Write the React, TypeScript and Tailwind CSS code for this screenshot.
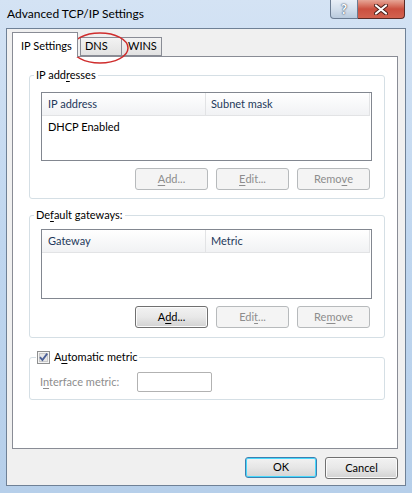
import React from 'react';

function Acc({ text, k }: { text: string; k: number }) {
    if (k < 0) return <>{text}</>;
    return (
        <>
            {text.slice(0, k)}
            <span className="underline underline-offset-[2px]">{text[k]}</span>
            {text.slice(k + 1)}
        </>
    );
}

function Btn({ text, k, disabled, primary, w }: { text: string; k: number; disabled?: boolean; primary?: boolean; w: string }) {
    const base = 'flex items-center justify-center rounded-[3px] border text-[11px]';
    if (disabled) {
        return (
            <div className={`${base} ${w} h-[22px] border-[#b7babc] bg-[#f4f4f4] text-[#8d8d8d]`}>
                <Acc text={text} k={k} />
            </div>
        );
    }
    if (primary) {
        return (
            <div className={`${base} ${w} h-[21px] border-[#3c7fb1] bg-gradient-to-b from-[#f2f2f2] via-[#e6e6e6] to-[#d4d4d4] text-black shadow-[inset_0_0_0_1px_#48d8fb]`}>
                <Acc text={text} k={k} />
            </div>
        );
    }
    return (
        <div className={`${base} ${w} h-[22px] border-[#707070] bg-gradient-to-b from-[#f2f2f2] via-[#e8e8e8] to-[#d2d2d2] text-black shadow-[inset_0_0_0_1px_#fbfbfb]`}>
            <Acc text={text} k={k} />
        </div>
    );
}

function ListBox({ h, cols, rows }: { h: string; cols: string[]; rows: string[] }) {
    return (
        <div className={`${h} border border-[#828790] bg-white`}>
            <div className="flex h-[23px]">
                {cols.map((c, i) => (
                    <div
                        key={c}
                        className={`flex h-full w-[164px] items-center border-b border-r border-[#e2e3e5] bg-gradient-to-b from-white to-[#f1f2f4] text-[#1e395b] ${i === 0 ? 'pl-[6px]' : 'pl-[5px]'}`}
                    >
                        {c}
                    </div>
                ))}
            </div>
            {rows.map((r) => (
                <div key={r} className="pl-[6px] pt-[2px] leading-[18px]">
                    {r}
                </div>
            ))}
        </div>
    );
}

export default function App() {
    return (
        <div className="relative h-[493px] w-[412px] overflow-hidden bg-gradient-to-b from-[#d4e3f4] via-[#bfd6ef] to-[#b6cfea] font-['Lato','Liberation_Sans',sans-serif] text-[11px] text-black">
            {/* Title bar */}
            <div className="flex h-[28px] items-start justify-between pl-[7px] pr-[7px]">
                <div className="pt-[6px] text-[12px] leading-[16px] text-black">Advanced TCP/IP Settings</div>
                <div className="flex">
                    <div className="flex h-[19px] w-[28px] items-center justify-center rounded-bl-[4px] border border-t-0 border-[#6b7c92] bg-gradient-to-b from-[#e9eff7] via-[#d3dfec] to-[#b9cadd]">
                        <span className="text-[13px] font-bold leading-none text-white [text-shadow:0_0_2px_#3a4a60,0_0_1px_#3a4a60]">?</span>
                    </div>
                    <div className="flex h-[19px] w-[47px] items-center justify-center rounded-br-[4px] border border-l-0 border-t-0 border-[#5a2a25] bg-gradient-to-b from-[#e6a596] via-[#cb4f3f] to-[#d2624f]">
                        <svg width="14" height="11" viewBox="0 0 14 11">
                            <path d="M2 1.5 L12 9.5 M12 1.5 L2 9.5" stroke="#4a1e18" strokeWidth="4" strokeLinecap="round" />
                            <path d="M2 1.5 L12 9.5 M12 1.5 L2 9.5" stroke="#ffffff" strokeWidth="2.2" strokeLinecap="round" />
                        </svg>
                    </div>
                </div>
            </div>

            {/* Client area */}
            <div className="mx-[6px] h-[458px] border border-[#6f8196] bg-[#f0f0f0] pt-[3px]">
                {/* Tabs */}
                <div className="flex h-[24px] items-end pl-[5px]">
                    <div className="relative z-10 -mb-px flex h-[25px] w-[66px] items-start border border-b-0 border-[#898c95] bg-white pl-[8px] pt-[5px]">
                        IP Settings
                    </div>
                    <div className="ml-[2px] flex h-[19px] w-[42px] items-center border border-[#898c95] bg-gradient-to-b from-[#f3f3f3] to-[#e2e2e2] pl-[4px]">
                        DNS
                    </div>
                    <div className="-ml-px flex h-[19px] w-[41px] items-center border border-[#898c95] bg-gradient-to-b from-[#f3f3f3] to-[#e2e2e2] pl-[6px]">
                        WINS
                    </div>
                </div>

                {/* Tab panel */}
                <div className="ml-[5px] h-[393px] w-[386px] border border-[#898c95] bg-white pt-[10px]">
                    <fieldset className="ml-[16px] w-[356px] rounded-[3px] border border-[#d5dfe5] pb-[8px] pl-[11px] pr-[12px] pt-[9px]">
                        <legend className="-ml-[7px] px-[2px] leading-[16px]">
                            IP add<Acc text="resses" k={0} />
                        </legend>
                        <ListBox h="h-[69px]" cols={['IP address', 'Subnet mask']} rows={['DHCP Enabled']} />
                        <div className="mt-[7px] flex justify-end gap-[8px] pr-[2px]">
                            <Btn text="Add..." k={0} disabled w="w-[73px]" />
                            <Btn text="Edit..." k={0} disabled w="w-[73px]" />
                            <Btn text="Remove" k={4} disabled w="w-[73px]" />
                        </div>
                    </fieldset>

                    <fieldset className="ml-[16px] mt-[8px] w-[356px] rounded-[3px] border border-[#d5dfe5] pb-[9px] pl-[11px] pr-[12px] pt-[6px]">
                        <legend className="-ml-[7px] px-[2px] leading-[16px]">
                            <Acc text="Default gateways:" k={2} />
                        </legend>
                        <ListBox h="h-[70px]" cols={['Gateway', 'Metric']} rows={[]} />
                        <div className="mt-[7px] flex justify-end gap-[8px] pr-[2px]">
                            <Btn text="Add..." k={1} w="w-[73px]" />
                            <Btn text="Edit..." k={3} disabled w="w-[73px]" />
                            <Btn text="Remove" k={2} disabled w="w-[73px]" />
                        </div>
                    </fieldset>

                    <fieldset className="ml-[16px] mt-[11px] w-[356px] rounded-[3px] border border-[#d5dfe5] pb-[7px] pl-[10px] pr-[12px] pt-[7px]">
                        <legend className="-ml-[4px] flex items-center gap-[4px] px-[1px] leading-[16px]">
                            <svg width="13" height="13" viewBox="0 0 13 13">
                                <rect x="0.5" y="0.5" width="12" height="12" fill="#f4f4f4" stroke="#8e8f8f" />
                                <rect x="2.5" y="2.5" width="8" height="8" fill="#e6e6e6" stroke="#c9c9c9" />
                                <path d="M3 6.2 L5.4 9 L10.2 2.6" fill="none" stroke="#4a5f97" strokeWidth="1.8" />
                            </svg>
                            <span>
                                <Acc text="Automatic metric" k={1} />
                            </span>
                        </legend>
                        <div className="flex items-center">
                            <div className="w-[97px] text-[#8d8d8d]">
                                <Acc text="Interface metric:" k={1} />
                            </div>
                            <div className="h-[20px] w-[75px] rounded-[2px] border border-[#b2b2b2] bg-white" />
                        </div>
                    </fieldset>
                </div>

                {/* Dialog buttons */}
                <div className="mt-[8px] flex justify-end gap-[8px] pr-[7px]">
                    <Btn text="OK" k={-1} primary w="w-[72px]" />
                    <Btn text="Cancel" k={-1} w="w-[73px]" />
                </div>
            </div>

            {/* red annotation around the DNS tab */}
            <svg className="absolute left-[70px] top-[31px]" width="60" height="34" viewBox="0 0 60 34">
                <ellipse cx="30" cy="17" rx="28" ry="15" fill="none" stroke="#cf2d2d" strokeWidth="1.5" />
            </svg>
        </div>
    );
}
